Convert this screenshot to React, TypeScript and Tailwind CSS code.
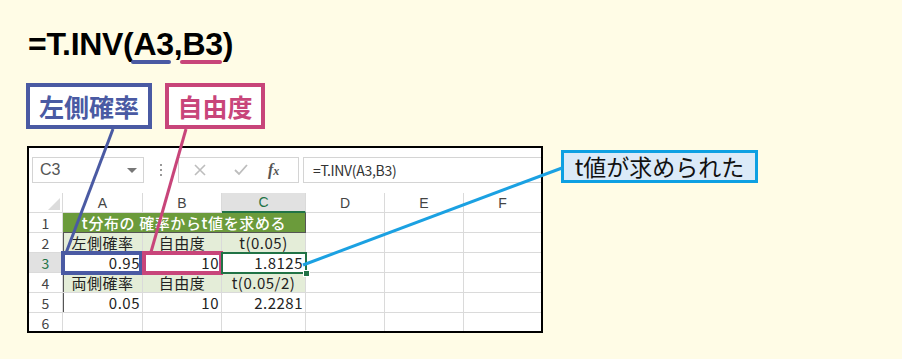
import React from "react";

const jp = "font-['Noto_Sans_CJK_JP','Noto_Sans',sans-serif]";
const cols = ["A", "B", "C", "D", "E", "F"];

const Cell = ({ children, className = "" }: { children?: React.ReactNode; className?: string }) => (
  <div className={`h-full flex items-center border-r border-b border-[#dadada] leading-none overflow-hidden whitespace-nowrap ${className}`}>
    {children}
  </div>
);

const RowHead = ({ n, active }: { n: number; active?: boolean }) => (
  <Cell className={`justify-center text-[14px] ${active ? "bg-[#e1e1e1] text-[#217346]" : "bg-white text-[#444]"}`}>{n}</Cell>
);

const Empty = () => <Cell />;

const Label = ({ text, left }: { text: string; left?: boolean }) => (
  <Cell className={`justify-center bg-[#e4edd8] text-[15px] tracking-[0.5px] text-[#222] border-[#555] ${left ? "shadow-[inset_1px_0_0_#555]" : ""}`}>
    {text}
  </Cell>
);

const Num = ({ v, left }: { v: string; left?: boolean }) => (
  <Cell className={`justify-end pr-[2px] bg-white text-[15px] tracking-[0.5px] text-[#222] border-[#555] ${left ? "shadow-[inset_1px_0_0_#555]" : ""}`}>
    {v}
  </Cell>
);

const Sheet = () => (
  <div className={`w-[516px] h-[187px] border-2 border-black bg-white overflow-hidden ${jp}`}>
    {/* formula bar */}
    <div className="flex items-center pt-[9px] h-[35px] pl-[3px]">
      <div className="w-[112px] h-[26px] border border-[#d4d4d4] flex items-center justify-between pl-[7px] pr-[6px] text-[16px] text-[#555]">
        <span className="font-['Liberation_Sans',sans-serif]">C3</span>
        <span className="w-0 h-0 border-l-[5px] border-r-[5px] border-t-[5px] border-l-transparent border-r-transparent border-t-[#777]" />
      </div>
      <div className="w-[34px] flex flex-col items-center gap-[3px]">
        <span className="w-[2px] h-[2px] bg-[#999]" />
        <span className="w-[2px] h-[2px] bg-[#999]" />
        <span className="w-[2px] h-[2px] bg-[#999]" />
      </div>
      <div className="w-[121px] h-[26px] border border-[#d4d4d4] flex items-center">
        <svg width="14" height="14" viewBox="0 0 14 14" className="ml-[14px]">
          <path d="M2 2 L12 12 M12 2 L2 12" stroke="#bdbdbd" strokeWidth="1.6" />
        </svg>
        <svg width="16" height="14" viewBox="0 0 16 14" className="ml-[26px]">
          <path d="M2 7 L6 11 L14 2" stroke="#bdbdbd" strokeWidth="1.8" fill="none" />
        </svg>
        <span className="ml-[19px] font-['Liberation_Serif',serif] italic font-bold text-[16px] text-[#555]">
          f<span className="text-[12px]">x</span>
        </span>
      </div>
      <div className="ml-[4px] flex-1 h-[26px] border border-[#d4d4d4] border-r-0 flex items-center pl-[9px] text-[14px] text-[#333] tracking-[-0.3px]">
        =T.INV(A3,B3)
      </div>
    </div>
    {/* grid */}
    <div className="mt-[10px] grid grid-cols-[34px_80px_79px_84px_79px_79px_78px] grid-rows-[20px_20px_20px_20px_20px_20px_20px_19px]">
      <Cell className="bg-white relative">
        <svg width="12" height="12" viewBox="0 0 12 12" className="absolute right-[2px] bottom-[2px]">
          <path d="M12 0 L12 12 L0 12 Z" fill="#dcdcdc" />
        </svg>
      </Cell>
      {cols.map((c) => (
        <Cell
          key={c}
          className={`justify-center text-[14px] font-['Liberation_Sans',sans-serif] ${
            c === "C" ? "bg-[#e1e1e1] text-[#217346] border-b-2 border-b-[#217346]" : "bg-white text-[#444]"
          }`}
        >
          {c}
        </Cell>
      ))}

      <RowHead n={1} />
      <div className="col-span-3 h-full flex items-center justify-center bg-[#6b9b3b] text-white text-[15px] font-medium border-b border-r border-[#555] leading-none tracking-[0.6px] overflow-hidden">
        t分布の 確率からt値を求める
      </div>
      <Empty />
      <Empty />
      <Empty />

      <RowHead n={2} />
      <Label text="左側確率" left />
      <Label text="自由度" />
      <Label text="t(0.05)" />
      <Empty />
      <Empty />
      <Empty />

      <RowHead n={3} active />
      <div className="relative h-full">
        <Num v="0.95" left />
        <div className="absolute -left-[2px] -top-[2px] -bottom-[2px] right-0 border-4 border-[#4a5aa3] z-10" />
      </div>
      <div className="relative h-full">
        <Num v="10" />
        <div className="absolute -left-[1px] -top-[2px] -bottom-[2px] -right-[1px] border-4 border-[#c8457a] z-10" />
      </div>
      <div className="relative h-full">
        <Num v="1.8125" />
        <div className="absolute -left-[1px] -top-[1px] -bottom-[1px] -right-[1px] border-2 border-[#217346] z-10" />
        <div className="absolute -right-[4px] -bottom-[4px] w-[7px] h-[7px] bg-[#217346] border border-white z-20" />
      </div>
      <Empty />
      <Empty />
      <Empty />

      <RowHead n={4} />
      <Label text="両側確率" left />
      <Label text="自由度" />
      <Label text="t(0.05/2)" />
      <Empty />
      <Empty />
      <Empty />

      <RowHead n={5} />
      <Num v="0.05" left />
      <Num v="10" />
      <Num v="2.2281" />
      <Empty />
      <Empty />
      <Empty />

      <RowHead n={6} />
      {cols.map((c) => (
        <Empty key={c} />
      ))}
    </div>
  </div>
);

export default function App() {
  return (
    <div className="relative w-[902px] h-[359px] overflow-hidden bg-[#fffce6]">
      <div className="pt-[28px] pl-[28px] h-[60px] font-['Liberation_Sans',sans-serif] font-bold text-[32px] leading-none text-black tracking-[-0.3px]">
        <span>=T.INV(</span>
        <span className="relative inline-block">
          A3
          <span className="absolute left-[-2px] top-[32px] w-[40px] h-[4px] rounded-full bg-[#4a5aa3]" />
        </span>
        <span>,</span>
        <span className="relative inline-block">
          B3
          <span className="absolute left-[-2px] top-[32px] w-[42px] h-[4px] rounded-full bg-[#c8457a]" />
        </span>
        <span>)</span>
      </div>

      <div className={`mt-[23px] pl-[26px] flex gap-[13px] ${jp} font-bold text-[25px] leading-none`}>
        <div className="w-[126px] h-[46px] border-4 border-[#4a5aa3] bg-white text-[#4a5aa3] flex items-center justify-center">
          左側確率
        </div>
        <div className="w-[100px] h-[46px] border-4 border-[#c8457a] bg-white text-[#c8457a] flex items-center justify-center">
          自由度
        </div>
      </div>

      <div className="mt-[17px] pl-[27px] flex items-start">
        <Sheet />
        <div className={`ml-[18px] mt-[4px] w-[197px] h-[33px] border-[3px] border-[#0ea0e2] bg-[#dbeaf8] flex items-center justify-center ${jp} text-[23px] text-[#111] leading-none`}>
          t値が求められた
        </div>
      </div>

      <svg className="absolute inset-0 pointer-events-none z-30" width="902" height="359">
        <line x1="113" y1="129" x2="66" y2="253" stroke="#4a5aa3" strokeWidth="3" />
        <line x1="186" y1="129" x2="151" y2="252" stroke="#c8457a" strokeWidth="3" />
        <line x1="303" y1="265" x2="562" y2="168" stroke="#1ba1e2" strokeWidth="3" />
      </svg>
    </div>
  );
}
